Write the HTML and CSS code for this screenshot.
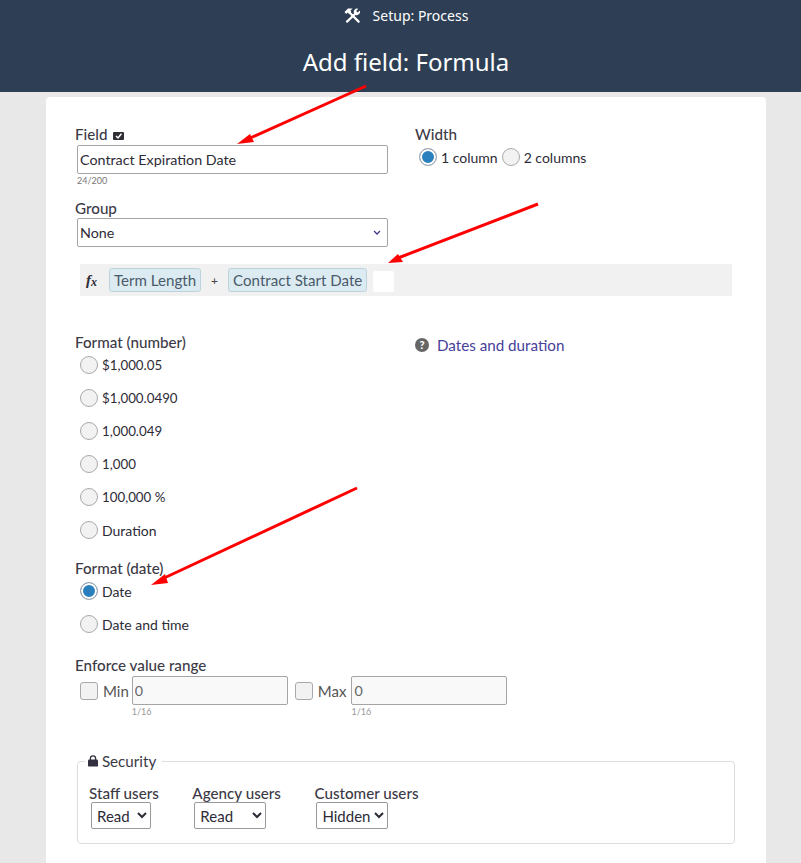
FILE: index.html
```html
<!DOCTYPE html>
<html lang="en">
<head>
    <meta charset="UTF-8">
    <meta name="viewport" content="width=device-width, initial-scale=1.0">
    <title>Add field: Formula</title>
    <link rel="stylesheet" href="styles.css">
</head>
<body>
    <header class="top-bar">
        <div class="crumb">
            <svg class="tools-icon" viewBox="0 0 17 15" width="17" height="15">
                <g fill="#fff">
                    <path d="M0.5 4 L4 0.5 H8.5 L6.6 2.4 L7.2 4 L5 5.8 L3.6 4.6 L2.2 6 Z"/>
                    <path d="M15.8 2.4 L13.6 4.4 L12.2 3 L14.2 0.8 A3.4 3.4 0 0 0 10 5.4 L11.6 7 A3.4 3.4 0 0 0 15.8 2.4 Z"/>
                </g>
                <g stroke="#fff" stroke-width="2.2" stroke-linecap="round">
                    <line x1="5.5" y1="4.5" x2="14.6" y2="13.6"/>
                    <line x1="11" y1="6" x2="3" y2="13.6"/>
                </g>
            </svg>
            <span>Setup: Process</span>
        </div>
        <h1>Add field: Formula</h1>
    </header>

    <main class="card">
        <div class="row-top">
            <div class="col-main">
                <label class="field-label">Field
                    <svg class="check-icon" viewBox="0 0 11 8" width="11" height="8">
                        <rect width="11" height="8" rx="1" fill="#2f3036"/>
                        <path d="M3 4 L5 6 L8.4 1.8" fill="none" stroke="#fff" stroke-width="1.5"/>
                    </svg>
                </label>
                <input class="text-input wide" type="text" value="Contract Expiration Date">
                <div class="counter">24/200</div>

                <label class="field-label group-label">Group</label>
                <div class="select-wrap">
                    <div class="text-input wide select-box">None</div>
                    <svg class="chevron" viewBox="0 0 8 5" width="8" height="5">
                        <path d="M1 1 L4 4 L7 1" fill="none" stroke="#3f3a8c" stroke-width="1.3"/>
                    </svg>
                </div>
            </div>
            <div class="col-side">
                <label class="field-label">Width</label>
                <div class="inline-radios">
                    <label class="radio"><input type="radio" name="width" checked> 1 column</label>
                    <label class="radio"><input type="radio" name="width"> 2 columns</label>
                </div>
            </div>
        </div>

        <div class="formula-bar">
            <span class="fx">f<sub>x</sub></span>
            <span class="token">Term Length</span>
            <span class="op">+</span>
            <span class="token">Contract Start Date</span>
            <span class="caret-box"></span>
        </div>

        <div class="row-format">
            <div class="col-main">
                <label class="field-label">Format (number)</label>
                <div class="radio-list">
                    <label class="radio num"><input type="radio" name="num"> $1,000.05</label>
                    <label class="radio num"><input type="radio" name="num"> $1,000.0490</label>
                    <label class="radio num"><input type="radio" name="num"> 1,000.049</label>
                    <label class="radio num"><input type="radio" name="num"> 1,000</label>
                    <label class="radio num"><input type="radio" name="num"> 100,000 %</label>
                    <label class="radio"><input type="radio" name="num"> Duration</label>
                </div>
                <label class="field-label date-label">Format (date)</label>
                <div class="radio-list">
                    <label class="radio"><input type="radio" name="date" checked> Date</label>
                    <label class="radio"><input type="radio" name="date"> Date and time</label>
                </div>
            </div>
            <div class="col-side">
                <a class="help-link" href="#"><span class="help-icon">?</span>Dates and duration</a>
            </div>
        </div>

        <label class="field-label range-label">Enforce value range</label>
        <div class="range-row">
            <label class="check"><input type="checkbox"> Min</label>
            <div class="range-input">
                <input class="text-input range-box" type="text" value="0">
                <div class="counter">1/16</div>
            </div>
            <label class="check"><input type="checkbox"> Max</label>
            <div class="range-input max">
                <input class="text-input range-box" type="text" value="0">
                <div class="counter">1/16</div>
            </div>
        </div>

        <fieldset class="security">
            <legend>
                <svg viewBox="0 0 10 12" width="10" height="12">
                    <path d="M2.4 5 V3.4 a2.6 2.6 0 0 1 5.2 0 V5" fill="none" stroke="#33303f" stroke-width="1.3"/>
                    <rect y="4.6" width="10" height="7" rx="1.2" fill="#33303f"/>
                </svg>
                Security
            </legend>
            <div class="perm">
                <label class="field-label">Staff users</label>
                <select class="perm-select staff"><option>Read</option></select>
            </div>
            <div class="perm">
                <label class="field-label">Agency users</label>
                <select class="perm-select agency"><option>Read</option></select>
            </div>
            <div class="perm">
                <label class="field-label">Customer users</label>
                <select class="perm-select customer"><option>Hidden</option></select>
            </div>
        </fieldset>
    </main>

    <!-- red annotation arrows drawn on top of the screenshot -->
    <svg class="arrows" viewBox="0 0 801 863" width="801" height="863">
        <g stroke="#f00" stroke-width="3" fill="#f00">
            <line x1="366" y1="86" x2="248" y2="139"/>
            <line x1="538" y1="204" x2="398" y2="258"/>
            <line x1="357" y1="488" x2="162" y2="579"/>
        </g>
        <g fill="#f00">
            <path d="M237 144 L250 134 L254 142 Z"/>
            <path d="M388 263 L398 254 L403 262 Z"/>
            <path d="M151 585 L165 574 L168 583 Z"/>
        </g>
    </svg>
</body>
</html>
```
FILE: styles.css
```css
* {
    box-sizing: border-box;
}
html, body {
    height: 863px;
    overflow: hidden;
}
body {
    margin: 0;
    background-color: #e8e8e8;
    font-family: 'Lato', sans-serif;
    font-size: 14px;
    color: #33303f;
    position: relative;
}
.top-bar {
    height: 92px;
    background-color: #2e3f55;
    color: #fff;
    text-align: center;
    font-family: 'Noto Sans', sans-serif;
    padding: 5px 0 0 11px;
}
.crumb {
    display: flex;
    justify-content: center;
    align-items: center;
    gap: 12px;
    height: 20px;
    font-size: 14px;
}
.top-bar h1 {
    margin: 21px 0 0;
    font-size: 24px;
    line-height: 32px;
    font-weight: 400;
}
.card {
    width: 720px;
    height: 780px;
    margin: 5px 0 0 46px;
    padding: 29px 29px 0;
    background: #fff;
    border-radius: 4px;
}
.row-top, .row-format {
    display: flex;
}
.col-main {
    width: 340px;
}
.field-label {
    display: block;
    height: 18px;
    line-height: 16px;
    font-size: 15.2px;
    font-weight: 500;
    color: #3c3a46;
}
.check-icon {
    margin-left: 2px;
}
.text-input {
    display: block;
    height: 29px;
    padding: 0 2px;
    border: 1px solid #a5a5a5;
    border-radius: 2px;
    background: #fff;
    font: inherit;
    font-size: 14.3px;
    line-height: 27px;
    color: #2d2b36;
    margin-left: 2px;
    margin-top: 1px;
    outline: none;
}
.wide {
    width: 311px;
}
.counter {
    margin: 1px 0 0 2px;
    height: 12px;
    font-size: 9px;
    line-height: 12px;
    color: #777;
}
.group-label {
    height: 17px;
    margin-top: 13px;
}
.select-wrap {
    position: relative;
}
.chevron {
    position: absolute;
    right: 34px;
    top: 12px;
}
.inline-radios {
    display: flex;
    gap: 4px;
    padding-left: 4px;
    margin-top: 1px;
}
.radio {
    display: flex;
    align-items: center;
    gap: 4px;
    height: 24px;
    font-size: 14px;
    color: #2d2b36;
}
.radio.num {
    font-size: 13.3px;
}
.radio input {
    appearance: none;
    -webkit-appearance: none;
    flex: none;
    width: 18px;
    height: 18px;
    margin: 0;
    border: 1px solid #a9a9ad;
    border-radius: 50%;
    background: #f2f2f3;
}
.radio input:checked {
    background: #2a80bd;
    box-shadow: inset 0 0 0 2px #fff;
}
.formula-bar {
    display: flex;
    align-items: center;
    width: 652px;
    height: 32px;
    margin: 17px 0 0 5px;
    padding-left: 6px;
    background: #f1f1f1;
}
.fx {
    width: 23px;
    font-family: 'Liberation Serif', serif;
    font-style: italic;
    font-weight: 700;
    font-size: 15px;
    color: #2d2b36;
}
.fx sub {
    font-size: 12px;
    vertical-align: -1px;
    line-height: 0;
}
.token {
    height: 24px;
    line-height: 22px;
    padding: 0 4px;
    font-size: 15.1px;
    border: 1px solid #bcd3de;
    border-radius: 3px;
    background: #dcebf2;
    color: #4a5a6a;
}
.op {
    width: 27px;
    text-align: center;
    font-size: 12px;
    color: #444;
}
.caret-box {
    width: 21px;
    height: 21px;
    margin: 3px 0 0 6px;
    background: #fff;
    border-radius: 2px;
}
.row-format {
    margin-top: 38px;
}
.radio-list {
    display: flex;
    flex-direction: column;
    gap: 9px;
    padding-left: 5px;
    margin-top: 1px;
}
.date-label {
    margin-top: 18px;
}
.help-link {
    display: flex;
    align-items: center;
    gap: 8px;
    margin-top: 2px;
    font-size: 15.2px;
    color: #46409a;
    text-decoration: none;
}
.help-icon {
    width: 14px;
    height: 14px;
    border-radius: 50%;
    background: #666;
    color: #fff;
    font-size: 11px;
    font-weight: 900;
    line-height: 14px;
    text-align: center;
}
.range-label {
    margin-top: 21px;
}
.range-row {
    display: flex;
    align-items: flex-start;
    margin-top: 1px;
}
.check {
    display: flex;
    align-items: center;
    gap: 5px;
    height: 29px;
    padding-left: 5px;
    font-size: 15px;
    color: #555;
}
.check input {
    appearance: none;
    -webkit-appearance: none;
    width: 18px;
    height: 18px;
    margin: 0;
    border: 1px solid #a9a9ad;
    border-radius: 3px;
    background: #f2f2f3;
}
.range-input {
    margin-left: 1px;
}
.range-input.max {
    margin-left: 3px;
}
.range-box {
    width: 156px;
    margin: 0 0 0 2px;
    background: #f9f9f9;
    color: #666;
}
.range-input .counter {
    color: #999;
}
.range-input + .check {
    margin-left: 2px;
}
.security {
    display: flex;
    gap: 33.5px;
    width: 658px;
    height: 91px;
    margin: 35px 0 0 2px;
    padding: 16px 11px 0;
    border: 1px solid #ddd;
    border-radius: 4px;
}
.security legend {
    padding: 0 6px 0 3px;
    margin-left: -4px;
    font-size: 15.2px;
    line-height: 16px;
    color: #3c3a46;
}
.perm-select {
    display: block;
    height: 27px;
    margin: -1px 0 0 2px;
    border: 1px solid #999;
    border-radius: 2px;
    background: #fff;
    font: inherit;
    font-size: 15px;
    color: #2d2b36;
    padding-left: 1px;
}
.staff {
    width: 60px;
}
.agency, .customer {
    width: 72px;
}
.arrows {
    position: absolute;
    left: 0;
    top: 0;
    pointer-events: none;
}
```
